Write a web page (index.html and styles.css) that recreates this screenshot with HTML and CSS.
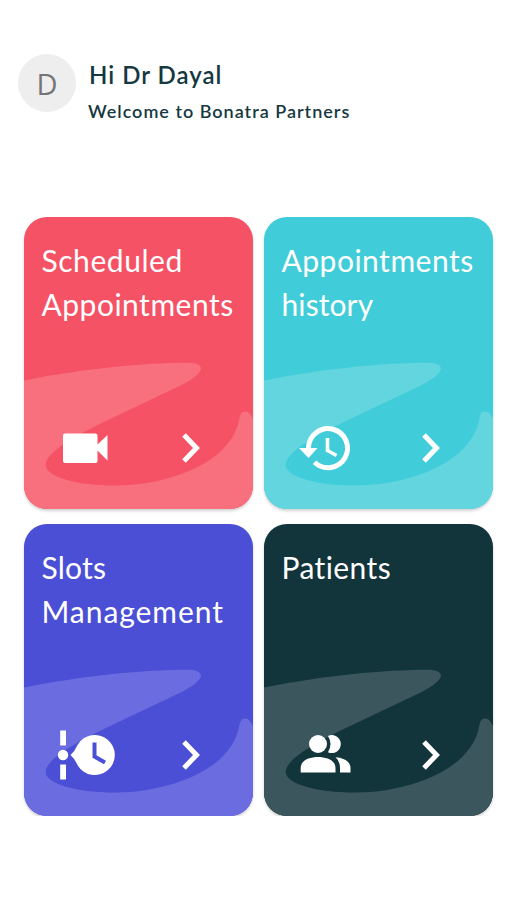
FILE: index.html
```html
<!DOCTYPE html>
<html lang="en">
<head>
  <meta charset="UTF-8">
  <meta name="viewport" content="width=device-width, initial-scale=1">
  <title>Bonatra Partners</title>
  <link rel="stylesheet" href="styles.css">
</head>
<body>

  <!-- shared shapes -->
  <svg class="defs" width="0" height="0" aria-hidden="true">
    <symbol id="wave" viewBox="0 0 229 292">
      <path d="M0 163.5C64 151 118 146 164 145.8C174 145.8 178 149 176.7 153C174 159 165 164 157.7 168L77.7 206C58 216 21.7 234 21.7 248C21.7 260 53 268.500 91 268.500C135 268.500 174 254 195 236C222 211 211 194.500 221 194.500C225 194.500 227 198 229 202V292H0Z"/>
    </symbol>
    <symbol id="chevron" viewBox="0 0 20 32">
      <path d="M3 3L15.5 16L3 29" fill="none" stroke="#fff" stroke-width="5"/>
    </symbol>
  </svg>

  <header class="header">
    <div class="avatar">D</div>
    <div>
      <h1>Hi Dr Dayal</h1>
      <p>Welcome to Bonatra Partners</p>
    </div>
  </header>

  <main class="tile-container">

    <a class="tile scheduled">
      <svg class="wave"><use href="#wave"/></svg>
      <h2><span class="w-scheduled">Scheduled</span><br><span class="w-appointments">Appointments</span></h2>
      <div class="actions">
        <svg class="icon" viewBox="0 0 60 52">
          <path d="M6 11.500H38.500Q40.500 11.500 40.500 13.500V22.500L50.500 13V38.500L40.500 28.500V39Q40.500 41 38.500 41H8Q6 41 6 39V13.500Q6 11.500 8 11.500Z"/>
        </svg>
        <svg class="chevron"><use href="#chevron"/></svg>
      </div>
    </a>

    <a class="tile history">
      <svg class="wave"><use href="#wave"/></svg>
      <h2><span class="w-appointments">Appointments</span><br><span class="w-history">history</span></h2>
      <div class="actions">
        <svg class="icon" viewBox="0 0 60 52">
          <path class="line" d="M11.500 27V26A19.500 19.500 0 1 1 17.500 40.200" stroke-width="5"/>
          <path d="M2 26H20.500L11.500 36Z"/>
          <path class="line" d="M30.500 16V28.500L39.500 33.500" stroke-width="3.600"/>
        </svg>
        <svg class="chevron"><use href="#chevron"/></svg>
      </div>
    </a>

    <a class="tile slots">
      <svg class="wave"><use href="#wave"/></svg>
      <h2><span class="w-slots">Slots</span><br><span class="w-management">Management</span></h2>
      <div class="actions">
        <svg class="icon" viewBox="0 0 60 52">
          <rect x="3.200" y="1.500" width="5.800" height="15"/>
          <rect x="3.200" y="35.500" width="5.800" height="15"/>
          <circle cx="6" cy="26" r="5.200"/>
          <path d="M13.500 26Q18 22 20.500 16A20 20 0 1 1 20.500 36Q18 30 13.500 26Z"/>
          <path class="hands" d="M37.500 13.500V27.500L48 33.500"/>
        </svg>
        <svg class="chevron"><use href="#chevron"/></svg>
      </div>
    </a>

    <a class="tile patients">
      <svg class="wave"><use href="#wave"/></svg>
      <h2><span class="w-patients">Patients</span></h2>
      <div class="actions">
        <svg class="icon" viewBox="0 0 60 52">
          <circle cx="21" cy="15" r="9"/>
          <path d="M3.700 43.500V39C3.700 31 13 28 21 28S38.500 31 38.500 39V43.500Z"/>
          <path d="M31 6.900A9 9 0 1 1 31 23.200Q36 15 31 6.900Z"/>
          <path d="M38.500 28.300C46 28.800 53.500 32 53.500 39V43.500H43V39Q43 32 38.500 28.300Z"/>
        </svg>
        <svg class="chevron"><use href="#chevron"/></svg>
      </div>
    </a>

  </main>

</body>
</html>
```
FILE: styles.css
```css
* {
  box-sizing: border-box;
}

body {
  margin: 0;
  background-color: #fff;
  font-family: Lato, sans-serif;
}

.defs {
  display: block;
}

.header {
  display: flex;
  height: 163px;
  margin-top: 54px;
  padding-left: 18px;
  gap: 12px;
  color: #16383f;
}

.avatar {
  width: 58px;
  height: 58px;
  border-radius: 50%;
  background-color: #eee;
  color: #757575;
  font-family: "Open Sans", sans-serif;
  font-size: 29px;
  line-height: 60px;
  text-align: center;
}

h1 {
  margin: 5px 0 0 1px;
  font-size: 24px;
  font-weight: 600;
  line-height: 32px;
  letter-spacing: 1px;
}

.header p {
  margin: 8px 0 0;
  font-size: 18px;
  font-weight: 600;
  line-height: 24px;
  letter-spacing: 1px;
}

.tile-container {
  display: grid;
  grid-template-columns: 228.5px 228.5px;
  grid-auto-rows: 292px;
  gap: 15px 11.5px;
  padding: 0 0 0 24px;
}

.tile {
  position: relative;
  display: flex;
  flex-direction: column;
  justify-content: space-between;
  padding: 21px 0 35px 17.5px;
  border-radius: 23px;
  overflow: hidden;
  color: #fff;
  box-shadow: 0 2px 3px rgba(0, 0, 0, 0.18);
}

.scheduled { background-color: #f55265; }
.history { background-color: #40cdd9; }
.slots { background-color: #4b4fd5; }
.patients { background-color: #12343b; }

/* light swoosh behind the icons */
.wave {
  position: absolute;
  inset: 0;
  width: 229px;
  height: 292px;
}

.scheduled .wave { fill: #f86f7e; }
.history .wave { fill: #62d5df; }
.slots .wave { fill: #6b6ce0; }
.patients .wave { fill: #3b565c; }

h2 {
  position: relative;
  margin: 0;
  font-size: 30px;
  font-weight: 400;
  line-height: 44px;
  white-space: nowrap;
}

.w-appointments { letter-spacing: 0.5px; }
.w-scheduled { letter-spacing: 0.55px; }
.w-history { letter-spacing: 0.1px; }
.w-slots { letter-spacing: 0.2px; }
.w-management { letter-spacing: 0.95px; }
.w-patients { letter-spacing: 0.4px; }

.actions {
  position: relative;
  display: flex;
  align-items: center;
  gap: 64px;
  padding-left: 15.5px;
}

.icon {
  width: 60px;
  height: 52px;
  fill: #fff;
}

.line {
  fill: none;
  stroke: #fff;
}

.hands {
  fill: none;
  stroke: #4b4fd5;
  stroke-width: 4;
}

.chevron {
  width: 20px;
  height: 32px;
}
```
